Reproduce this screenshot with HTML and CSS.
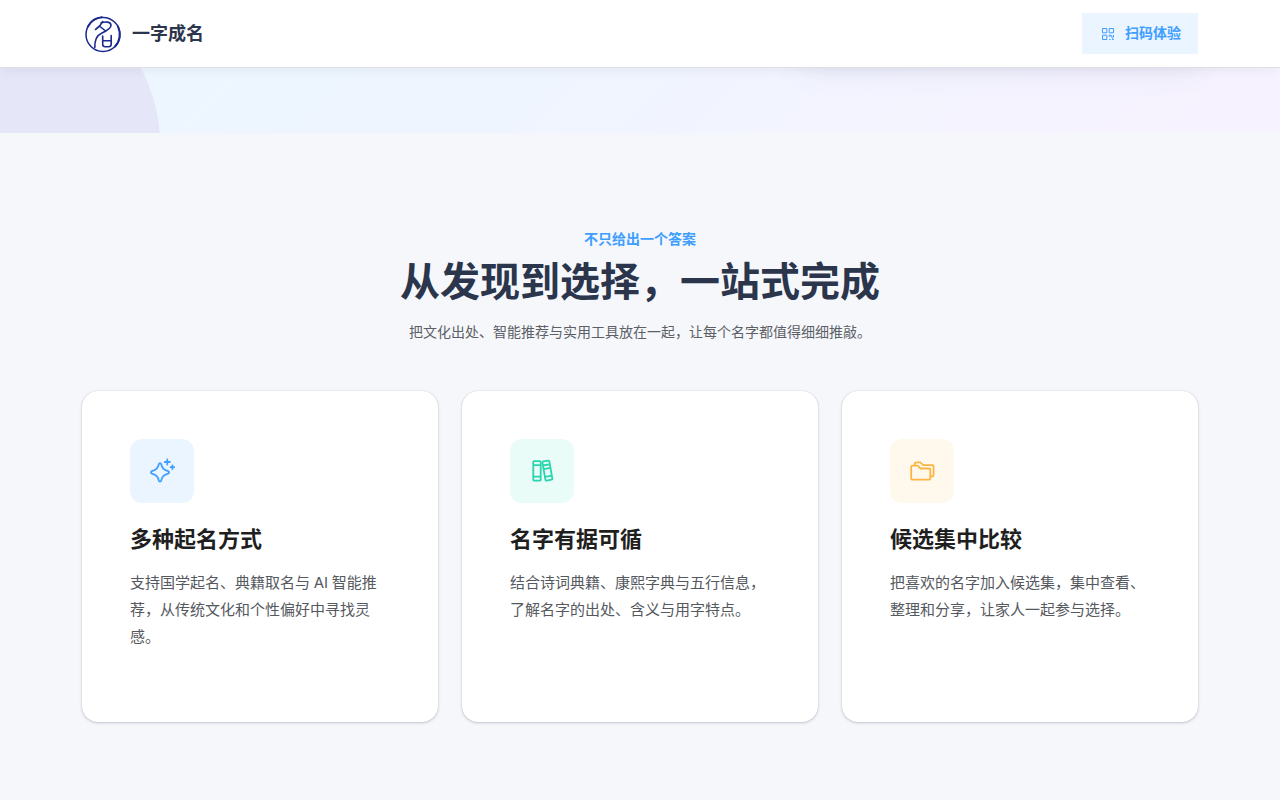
FILE: index.html
```html
<!DOCTYPE html>
<html lang="zh-CN">

<head>
    <meta charset="UTF-8">
    <meta name="viewport" content="width=device-width, initial-scale=1.0">
    <title>一字成名</title>
    <link rel="stylesheet" href="styles.css">
</head>

<body>

    <!-- 顶部导航 -->
    <header class="header">
        <div class="container header-inner">
            <a class="brand" href="#">
                <svg class="brand-logo" viewBox="0 0 42 42" fill="none" stroke="#1b2a8e" stroke-linecap="round" stroke-linejoin="round">
                    <circle cx="21" cy="21.500" r="17" stroke-width="1.500" />
                    <path d="M6 13.500C9 7.500 14 4.500 20 4.100M36 13.500c3 7 2 15-3 20" stroke-width="1.900" />
                    <path d="M20.500 8.500C19 12 16.500 14.500 13.500 16.500M19 10c4-1.500 10-1.500 10 2.300 0 3.200-4.500 5.700-9 7.700-5 2.200-7.500 6-7.200 14.500M18 13.500l5 4M20.700 23v8.300c0 1.700.9 2.400 2.500 2.400h3.300c1.800 0 2.700-.9 2.700-2.700V22.500M20.700 27.800h8.500" stroke-width="1.600" />
                </svg>
                <span>一字成名</span>
            </a>
            <a class="scan-btn" href="#">
                <svg width="14" height="14" viewBox="0 0 14 14" fill="none" stroke="currentColor" stroke-width="1">
                    <path d="M1.500 1.500h4.300v4.300H1.500zM8.200 1.500h4.300v4.300H8.200zM1.500 8.200h4.300v4.300H1.500zM8.200 10V8.200h2V10h2.300V8M8.200 12.500h1.500M11.500 11.500v1.500M13 12h-1" />
                </svg>
                <span>扫码体验</span>
            </a>
        </div>
    </header>

    <!-- 首屏底部 -->
    <section class="hero">
        <div class="hero-circle"></div>
        <div class="hero-shadow"></div>
    </section>

    <!-- 功能介绍 -->
    <section class="features">
        <div class="container">
            <div class="section-head">
                <p class="eyebrow">不只给出一个答案</p>
                <h2>从发现到选择，一站式完成</h2>
                <p class="section-desc">把文化出处、智能推荐与实用工具放在一起，让每个名字都值得细细推敲。</p>
            </div>
            <div class="card-grid">
                <article class="card">
                    <div class="card-icon blue">
                        <svg width="28" height="28" viewBox="0 0 28 28" fill="none" stroke="currentColor" stroke-width="1.800" stroke-linecap="round" stroke-linejoin="round">
                            <path d="M12 6.200c.6 0 1 .4 1.200 1 1 4.100 2.300 5.500 6.900 7 1.300.4 1.300 2 0 2.400-4.600 1.500-5.900 2.900-6.900 7-.3 1.300-2.100 1.300-2.400 0-1-4.100-2.300-5.500-6.900-7-1.300-.4-1.300-2 0-2.400 4.600-1.500 5.900-2.900 6.900-7 .2-.6.600-1 1.200-1z" />
                            <path d="M19.300 2.400v5.200M16.700 5h5.200M24.400 8.400v3.600M22.600 10.200h3.600" />
                        </svg>
                    </div>
                    <h3>多种起名方式</h3>
                    <p>支持国学起名、典籍取名与 AI 智能推荐，从传统文化和个性偏好中寻找灵感。</p>
                </article>
                <article class="card">
                    <div class="card-icon green">
                        <svg width="28" height="28" viewBox="0 0 28 28" fill="none" stroke="currentColor" stroke-width="1.800" stroke-linejoin="round">
                            <rect x="5.300" y="4.100" width="7.400" height="19.600" rx="1" />
                            <path d="M5.300 8.200h7.400M5.300 19.700h7.400" />
                            <g transform="rotate(-10 19.400 13.600)">
                                <rect x="15.900" y="3.900" width="7" height="19.400" rx="1" />
                                <path d="M15.900 7.800h7M15.900 11.400h7M15.900 19.300h7" />
                            </g>
                        </svg>
                    </div>
                    <h3>名字有据可循</h3>
                    <p>结合诗词典籍、康熙字典与五行信息，了解名字的出处、含义与用字特点。</p>
                </article>
                <article class="card">
                    <div class="card-icon orange">
                        <svg width="28" height="28" viewBox="0 0 28 28" fill="none" stroke="currentColor" stroke-width="1.800" stroke-linecap="round" stroke-linejoin="round">
                            <path d="M4.200 8.700h5.300l3 2.800H21c.8 0 1.300.5 1.300 1.300v8.600c0 .8-.5 1.300-1.300 1.300H4.500c-.8 0-1.300-.5-1.300-1.300V9.900c0-.7.400-1.200 1-1.200z" />
                            <path d="M6.800 8.300V6.600c0-.8.500-1.300 1.300-1.300h4.200l3 2.800h9c.8 0 1.300.5 1.300 1.300v8.700c0 .8-.5 1.300-1.300 1.300h-1.800" />
                        </svg>
                    </div>
                    <h3>候选集中比较</h3>
                    <p>把喜欢的名字加入候选集，集中查看、整理和分享，让家人一起参与选择。</p>
                </article>
            </div>
        </div>
    </section>

</body>

</html>
```
FILE: styles.css
```css
* {
    box-sizing: border-box;
}

body {
    margin: 0;
    height: 800px;
    overflow: hidden;
    font-family: Inter, 'Noto Sans CJK SC', sans-serif;
    background: #f5f7fb;
    color: #1f1f1f;
}

h2, h3, p {
    margin: 0;
}

a {
    color: inherit;
    text-decoration: none;
}

.container {
    width: 1116px;
    margin: 0 auto;
}

/* 顶部导航 */
.header {
    position: relative;
    z-index: 2;
    height: 68px;
    background: #fff;
    border-bottom: 1px solid #dcdfe6;
    box-shadow: 0 2px 12px rgba(0, 0, 0, 0.06);
}

.header-inner {
    height: 67px;
    display: flex;
    align-items: center;
    justify-content: space-between;
}

.brand {
    display: flex;
    align-items: center;
    gap: 8px;
    font-size: 18px;
    font-weight: bold;
    color: #2b354b;
}

.brand span,
.scan-btn span {
    padding-bottom: 3px;
}

.brand-logo {
    width: 42px;
    height: 42px;
}

.scan-btn {
    display: flex;
    align-items: center;
    gap: 10px;
    height: 41px;
    padding: 0 17px 0 19px;
    background: #ebf5ff;
    color: #409eff;
    font-size: 14px;
    font-weight: bold;
}

/* 首屏底部 */
.hero {
    position: relative;
    height: 65px;
    overflow: hidden;
    background: linear-gradient(135deg, #edf6ff 0%, #eef5ff 35%, #f3f4ff 65%, #f7f2ff 100%);
}

.hero-circle {
    position: absolute;
    left: -160px;
    top: -84px;
    width: 320px;
    height: 320px;
    border-radius: 50%;
    background: #e5e7f9;
}

.hero-shadow {
    position: absolute;
    left: 800px;
    top: -40px;
    width: 398px;
    height: 40px;
    box-shadow: 0 0 32px rgba(80, 80, 130, 0.1);
}

/* 功能介绍 */
.features {
    padding-top: 96px;
}

.section-head {
    text-align: center;
}

.eyebrow {
    font-size: 14px;
    line-height: 20px;
    font-weight: bold;
    color: #409eff;
}

.section-head h2 {
    margin-top: 9px;
    font-size: 40px;
    line-height: 48px;
    font-weight: bold;
    color: #2b354b;
}

.section-desc {
    margin-top: 15px;
    font-size: 14px;
    line-height: 22px;
    color: #5c5f66;
}

.card-grid {
    display: grid;
    grid-template-columns: repeat(3, 1fr);
    gap: 24px;
    margin-top: 48px;
}

.card {
    height: 331px;
    padding: 48px;
    background: #fff;
    border-radius: 16px;
    box-shadow: 0 1px 3px rgba(30, 35, 60, 0.22), 0 0 1px rgba(30, 35, 60, 0.2);
}

.card-icon {
    width: 64px;
    height: 64px;
    display: flex;
    align-items: center;
    justify-content: center;
    border-radius: 12px;
}

.blue {
    background: #ebf5ff;
    color: #409eff;
}

.green {
    background: #e9fcf8;
    color: #2bd4ad;
}

.orange {
    background: #fff9ed;
    color: #fab545;
}

.card h3 {
    margin-top: 20px;
    font-size: 22px;
    line-height: 33px;
    font-weight: bold;
    color: #1f1f1f;
}

.card p {
    margin-top: 13px;
    font-size: 15px;
    line-height: 27px;
    word-spacing: -0.5px;
    color: #55585e;
}
```
